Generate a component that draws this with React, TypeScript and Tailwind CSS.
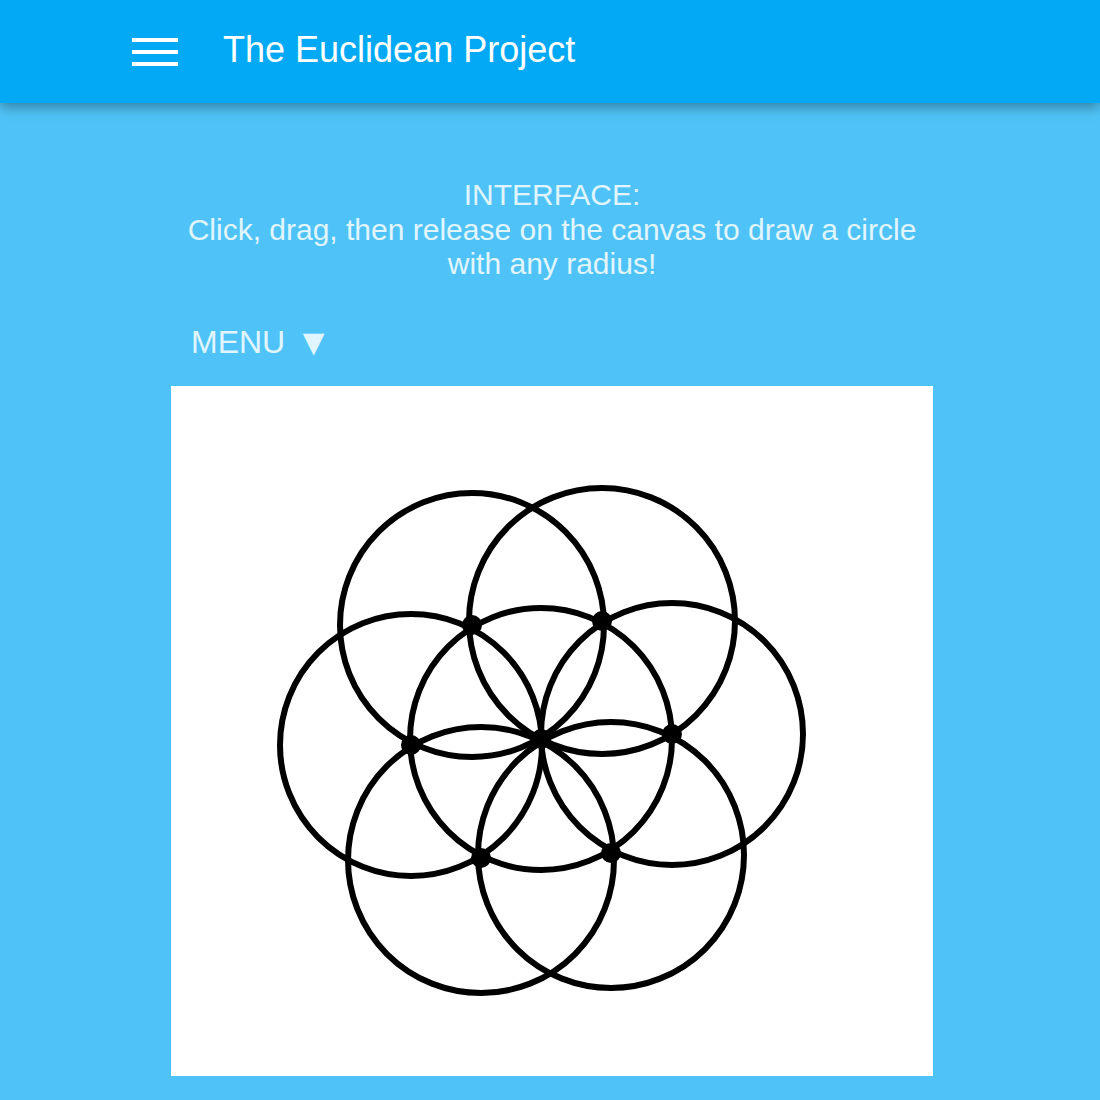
const dots: [number, number][] = [
  [370, 353],
  [301, 239],
  [431, 235],
  [501, 348],
  [440, 467],
  [310, 472],
  [240, 359],
]

const rings: [number, number, number][] = [
  [370, 353, 131],
  [301, 239, 132],
  [431, 235, 133],
  [501, 348, 131],
  [440, 469, 133],
  [310, 474, 133],
  [240, 359, 131],
]

function Seed() {
  return (
    <svg width="762" height="690" viewBox="0 0 762 690" className="block">
      {rings.map(([cx, cy, r], i) => (
        <circle key={i} cx={cx} cy={cy} r={r} fill="none" stroke="#000" strokeWidth="6" />
      ))}
      {dots.map(([cx, cy], i) => (
        <circle key={i} cx={cx} cy={cy} r="10" fill="#000" />
      ))}
    </svg>
  )
}

export default function App() {
  return (
    <div className="min-h-[1100px] bg-[#4fc3f7] font-['Liberation_Sans',Arial,sans-serif]">
      {/* Top bar */}
      <header className="h-[103px] bg-[#03a9f4] flex items-center pl-[132px] shadow-[0_4px_12px_rgba(0,0,0,0.35)] relative">
        <div className="flex flex-col gap-[8px] w-[46px]">
          <span className="block h-[4px] bg-white" />
          <span className="block h-[4px] bg-white" />
          <span className="block h-[4px] bg-white" />
        </div>
        <h1 className="ml-[45px] text-[36px] text-white leading-none pb-[3px]">The Euclidean Project</h1>
      </header>

      <main className="w-[762px] mx-auto pl-[4px] box-content">
        <p className="mt-[75px] text-center text-[30px] leading-[34.5px] text-[#e1f5fe]">
          INTERFACE:
          <br />
          Click, drag, then release on the canvas to draw a circle with any radius!
        </p>
        <div className="mt-[42px] pl-[20px] text-[32px] leading-[37px] text-[#e1f5fe] flex items-center">
          MENU <span className="ml-[10px] text-[37px] leading-none">▼</span>
        </div>
        <div className="mt-[25px] bg-white w-[762px] h-[690px]">
          <Seed />
        </div>
      </main>
    </div>
  )
}
